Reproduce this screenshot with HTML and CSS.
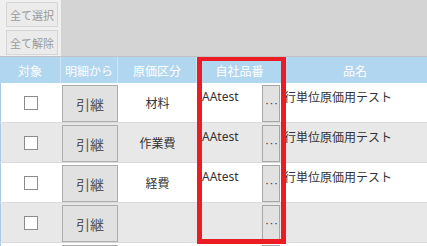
FILE: index.html
```html
<!DOCTYPE html>
<html lang="ja">
<head>
    <meta charset="UTF-8">
    <meta name="viewport" content="width=device-width, initial-scale=1.0">
    <title>原価明細</title>

    <link rel="stylesheet" href="styles.css">
</head>
<body>
    <div class="toolbar">
        <div class="side">
            <button class="tool-btn">全て選択</button>
            <button class="tool-btn">全て解除</button>
        </div>
    </div>

    <div class="grid-wrap">
        <div class="grid-head">
            <div class="hcell">対象</div>
            <div class="hcell">明細から</div>
            <div class="hcell">原価区分</div>
            <div class="hcell">自社品番</div>
            <div class="hcell">品名</div>
        </div>

        <div class="row">
            <div class="cell center"><span class="check"></span></div>
            <div class="cell btn-cell"><button class="take-btn">引継</button></div>
            <div class="cell center">材料</div>
            <div class="cell part-cell"><span class="part-no">AAtest</span><button class="more-btn">···</button></div>
            <div class="cell name-cell">行単位原価用テスト</div>
        </div>
        <div class="row alt">
            <div class="cell center"><span class="check"></span></div>
            <div class="cell btn-cell"><button class="take-btn">引継</button></div>
            <div class="cell center">作業費</div>
            <div class="cell part-cell"><span class="part-no">AAtest</span><button class="more-btn">···</button></div>
            <div class="cell name-cell">行単位原価用テスト</div>
        </div>
        <div class="row">
            <div class="cell center"><span class="check"></span></div>
            <div class="cell btn-cell"><button class="take-btn">引継</button></div>
            <div class="cell center">経費</div>
            <div class="cell part-cell"><span class="part-no">AAtest</span><button class="more-btn">···</button></div>
            <div class="cell name-cell">行単位原価用テスト</div>
        </div>
        <div class="row alt">
            <div class="cell center"><span class="check"></span></div>
            <div class="cell btn-cell"><button class="take-btn">引継</button></div>
            <div class="cell center"></div>
            <div class="cell part-cell"><span class="part-no"></span><button class="more-btn">···</button></div>
            <div class="cell name-cell"></div>
        </div>
        <!-- next row, only its top edge shows -->
        <div class="row partial">
            <div class="cell"></div>
            <div class="cell btn-cell"><button class="take-btn"></button></div>
            <div class="cell"></div>
            <div class="cell part-cell"><span class="part-no"></span><button class="more-btn"></button></div>
            <div class="cell"></div>
        </div>

        <!-- red frame marking the 自社品番 column -->
        <div class="highlight"></div>
    </div>
</body>
</html>
```

FILE: styles.css
```css
html, body {
    margin: 0;
    padding: 0;
}

body {
    width: 427px;
    height: 246px;
    overflow: hidden;
    background-color: #ffffff;
    font-family: "Noto Sans", "Noto Sans CJK JP", sans-serif;
    font-size: 12px;
    color: #333333;
}

/* top area with the select buttons */
.toolbar {
    height: 57px;
    box-sizing: border-box;
    background-color: #d4d4d4;
    border-bottom: 1px solid #c2c2c2;
    display: flex;
}

.side {
    width: 61px;
    background-color: #f0f0f0;
    padding: 2px 3px 0 6px;
    box-sizing: border-box;
    display: flex;
    flex-direction: column;
    gap: 3px;
}

.tool-btn {
    width: 52px;
    height: 25px;
    padding: 0;
    background-color: #ebebeb;
    border: 1px solid #d6d6d6;
    color: #9a9a9a;
    font-family: "Noto Sans CJK JP", sans-serif;
    font-size: 11px;
}

/* grid */
.grid-wrap {
    position: relative;
    height: 189px;
    overflow: hidden;
}

.grid-head,
.row {
    display: grid;
    grid-template-columns: 61px 57px 79px 86px 144px;
}

.grid-head {
    height: 26px;
    background-color: #b1d6ef;
}

.hcell {
    display: flex;
    align-items: center;
    justify-content: center;
    color: #ffffff;
    font-family: "Noto Sans CJK JP", sans-serif;
    font-size: 12px;
    border-right: 1px solid #cfe5f5;
}

.hcell:last-child {
    border-right: none;
}

.row {
    height: 40px;
    box-sizing: border-box;
    background-color: #ffffff;
    border-bottom: 1px solid #dadada;
    box-shadow: inset 1px 0 0 #a9c9e6;
}

.row.alt {
    background-color: #e8e8e8;
}

.cell {
    min-width: 0;
    overflow: hidden;
}

.center {
    display: flex;
    align-items: center;
    justify-content: center;
    font-family: "Noto Sans CJK JP", sans-serif;
}

.check {
    width: 14px;
    height: 14px;
    box-sizing: border-box;
    border: 1px solid #8c8c8c;
    background-color: #ffffff;
}

.btn-cell {
    padding: 2px 0 0 1px;
}

.take-btn {
    width: 56px;
    height: 37px;
    padding: 0;
    background-color: #e1e1e1;
    border: 1px solid #adadad;
    color: #555555;
    font-family: "Noto Sans CJK JP", sans-serif;
    font-size: 14px;
}

.part-cell {
    display: flex;
    align-items: flex-start;
}

.part-no {
    flex: 1;
    padding: 5px 0 0 5px;
}

.more-btn {
    width: 18px;
    height: 37px;
    margin: 2px 3px 0 0;
    padding: 0 0 0 2px;
    background-color: #e1e1e1;
    border: 1px solid #a6a6a6;
    color: #333333;
    font-family: "DejaVu Sans", sans-serif;
    font-size: 11px;
    letter-spacing: 1px;
    overflow: hidden;
}

.name-cell {
    padding: 5px 0 0 1px;
    white-space: nowrap;
    font-family: "Noto Sans CJK JP", sans-serif;
}

.highlight {
    position: absolute;
    left: 197px;
    top: -1px;
    width: 89px;
    height: 188px;
    box-sizing: border-box;
    border: 5px solid #ec1c24;
}
```
